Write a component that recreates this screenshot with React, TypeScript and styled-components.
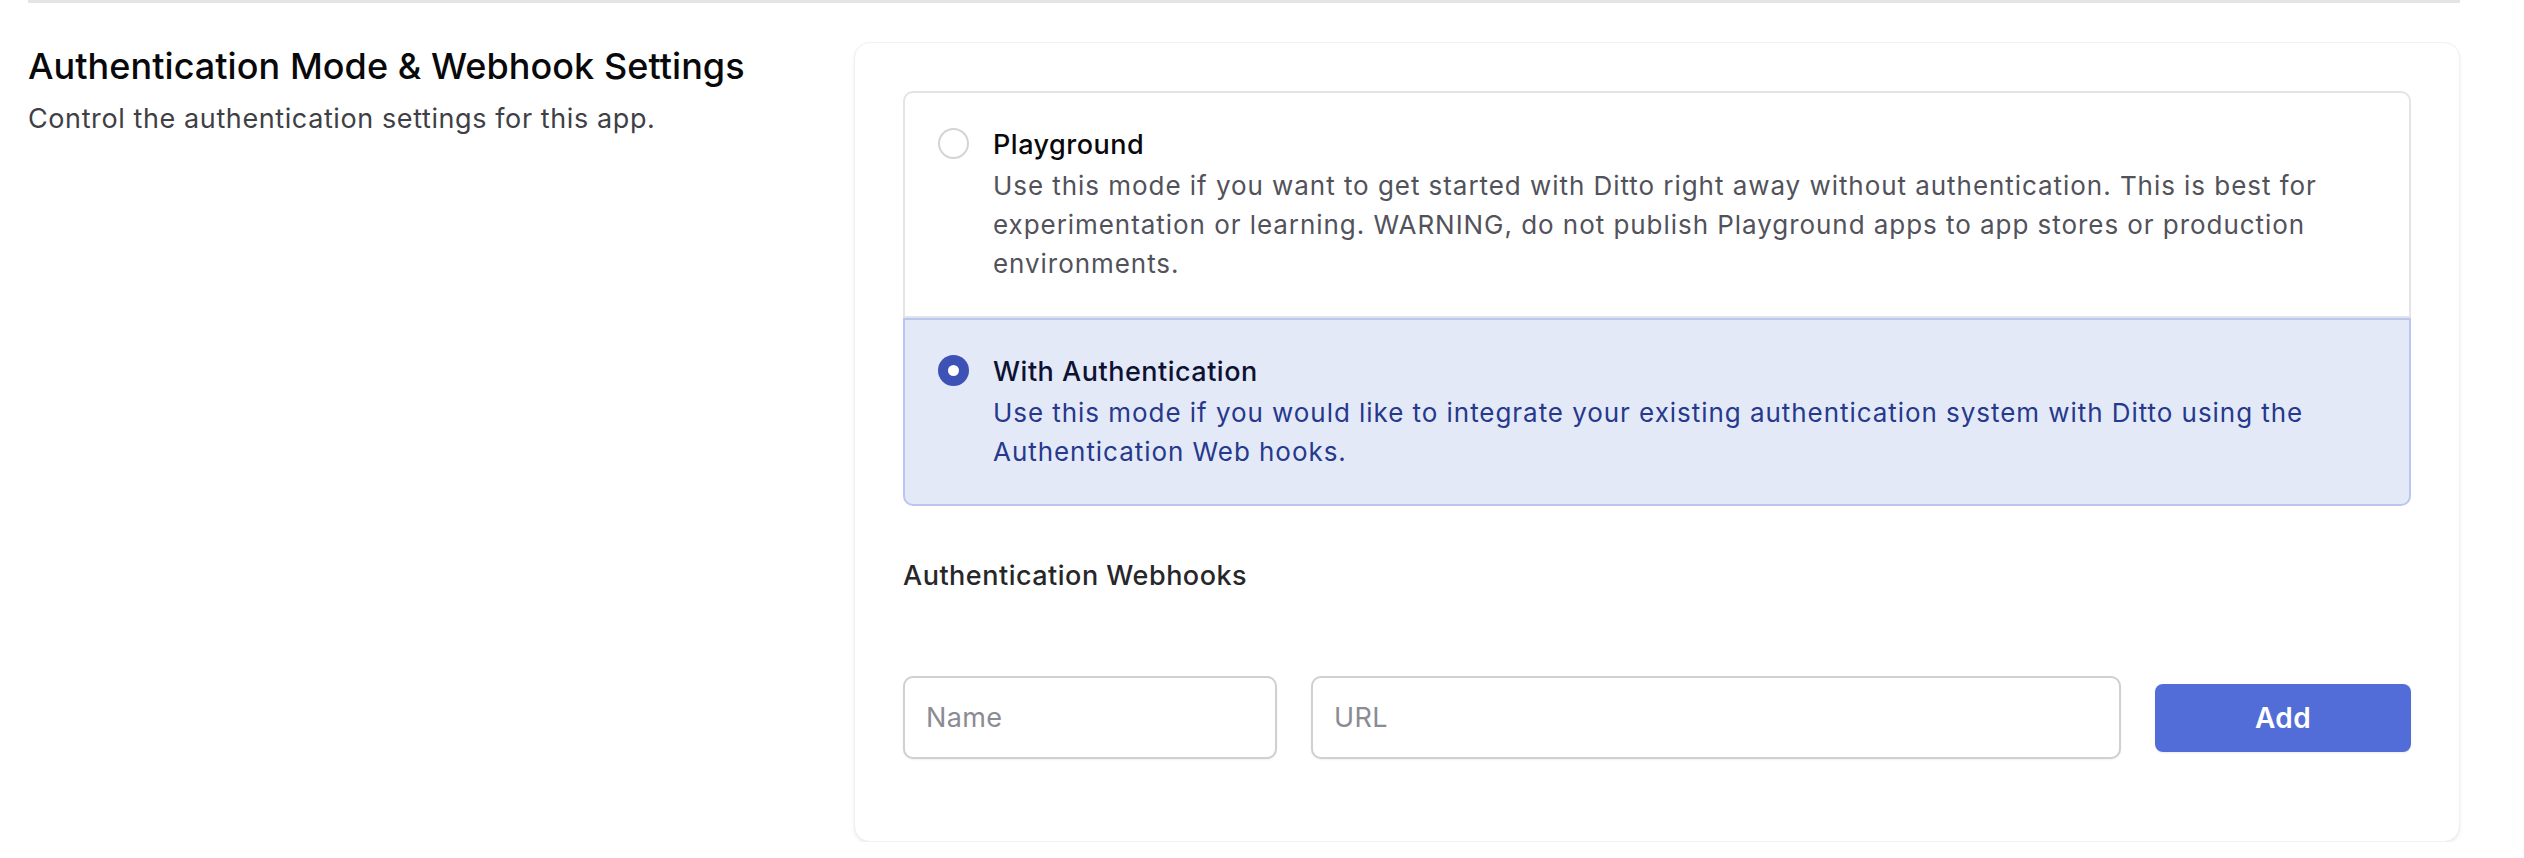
import styled, { createGlobalStyle } from 'styled-components';

const GlobalStyle = createGlobalStyle`
  html, body {
    margin: 0;
    padding: 0;
    background: #ffffff;
  }
  body {
    font-family: Inter, "Noto Sans", "Liberation Sans", sans-serif;
    -webkit-font-smoothing: antialiased;
  }
  * { box-sizing: border-box; }
`;

interface modeOption {
  id: string,
  label: string,
  description: string
}

const modes: modeOption[] = [
  {
    id: 'playground',
    label: 'Playground',
    description: 'Use this mode if you want to get started with Ditto right away without authentication. This is best for experimentation or learning. WARNING, do not publish Playground apps to app stores or production environments.'
  },
  {
    id: 'auth',
    label: 'With Authentication',
    description: 'Use this mode if you would like to integrate your existing authentication system with Ditto using the Authentication Web hooks.'
  }
];

namespace style {
  export const Page = styled.div`
    padding: 0 64px 0 28px;
  `;

  export const Section = styled.section`
    display: grid;
    grid-template-columns: repeat(3, 1fr);
    column-gap: 46px;
    border-top: 3px solid #e4e4e7;
    padding-top: 39px;
  `;

  export const Header = styled.div`
    grid-column: span 1;
  `;

  export const Title = styled.h2`
    margin: 0;
    font-size: 36px;
    line-height: 48px;
    font-weight: 500;
    color: #09090b;
    letter-spacing: 0.05px;
  `;

  export const Subtitle = styled.p`
    margin: 9px 0 0;
    font-size: 27px;
    line-height: 39px;
    letter-spacing: 0.6px;
    color: #3f3f46;
  `;

  export const Card = styled.div`
    grid-column: span 2;
    background: #ffffff;
    border: 1px solid #f1f1f3;
    border-radius: 16px;
    box-shadow: 0 2px 4px rgba(0, 0, 0, 0.06), 0 1px 2px rgba(0, 0, 0, 0.04);
    padding: 48px 48px 82px;
  `;

  export const Options = styled.div`
    display: flex;
    flex-direction: column;
  `;

  export const Option = styled.label<{ $selected: boolean }>`
    display: flex;
    gap: 24px;
    padding: 32px 33px 33px;
    border: 2px solid ${p => (p.$selected ? '#b9c7f0' : '#e4e4e7')};
    background: ${p => (p.$selected ? '#e4e9f8' : '#ffffff')};
    cursor: pointer;

    &:first-child {
      border-radius: 10px 10px 0 0;
    }
    &:last-child {
      border-radius: 0 0 10px 10px;
    }
  `;

  export const Radio = styled.span<{ $selected: boolean }>`
    flex: none;
    width: 31px;
    height: 31px;
    margin-top: 3px;
    border-radius: 50%;
    display: flex;
    align-items: center;
    justify-content: center;
    background: ${p => (p.$selected ? '#3e51b5' : '#ffffff')};
    border: ${p => (p.$selected ? 'none' : '2px solid #d4d4d8')};

    &::after {
      content: '';
      display: ${p => (p.$selected ? 'block' : 'none')};
      width: 11px;
      height: 11px;
      border-radius: 50%;
      background: #ffffff;
    }
  `;

  export const OptionText = styled.div`
    display: flex;
    flex-direction: column;
  `;

  export const OptionLabel = styled.span<{ $selected: boolean }>`
    font-size: 27px;
    line-height: 40px;
    font-weight: 500;
    letter-spacing: 0.5px;
    color: ${p => (p.$selected ? '#0d1233' : '#09090b')};
  `;

  export const OptionDesc = styled.span<{ $selected: boolean }>`
    margin-top: 1px;
    font-size: 26px;
    line-height: 39px;
    letter-spacing: 0.95px;
    color: ${p => (p.$selected ? '#26398c' : '#52525b')};
  `;

  export const SubHeading = styled.h3`
    margin: 50px 0 0;
    font-size: 27px;
    line-height: 39px;
    font-weight: 500;
    letter-spacing: 0.5px;
    color: #27272a;
  `;

  export const HookRow = styled.div`
    display: grid;
    grid-template-columns: 374px 1fr 256px;
    column-gap: 34px;
    align-items: center;
    margin-top: 81px;
  `;

  export const Input = styled.input`
    height: 83px;
    width: 100%;
    padding: 0 21px;
    border: 2px solid #cfcfd4;
    border-radius: 10px;
    box-shadow: 0 1px 2px rgba(0, 0, 0, 0.06);
    font-family: inherit;
    font-size: 27px;
    letter-spacing: 0.4px;
    color: #18181b;
    outline: none;

    &::placeholder {
      color: #8b8b94;
    }
  `;

  export const AddButton = styled.button`
    height: 68px;
    border: none;
    border-radius: 8px;
    background: #526dd8;
    color: #ffffff;
    font-family: inherit;
    font-size: 28px;
    font-weight: 600;
    letter-spacing: 0.4px;
    box-shadow: 0 1px 2px rgba(0, 0, 0, 0.08);
    cursor: pointer;
  `;
}

export default function App() {
  const selected = 'auth';

  return (
    <style.Page>
      <GlobalStyle />
      <style.Section>
        <style.Header>
          <style.Title>Authentication Mode &amp; Webhook Settings</style.Title>
          <style.Subtitle>Control the authentication settings for this app.</style.Subtitle>
        </style.Header>

        <style.Card>
          <style.Options>
            {modes.map(mode => {
              const isOn = mode.id === selected;
              return (
                <style.Option key={mode.id} $selected={isOn}>
                  <style.Radio $selected={isOn} />
                  <style.OptionText>
                    <style.OptionLabel $selected={isOn}>{mode.label}</style.OptionLabel>
                    <style.OptionDesc $selected={isOn}>{mode.description}</style.OptionDesc>
                  </style.OptionText>
                </style.Option>
              );
            })}
          </style.Options>

          <style.SubHeading>Authentication Webhooks</style.SubHeading>

          <style.HookRow>
            <style.Input placeholder="Name" />
            <style.Input placeholder="URL" />
            <style.AddButton>Add</style.AddButton>
          </style.HookRow>
        </style.Card>
      </style.Section>
    </style.Page>
  );
}
